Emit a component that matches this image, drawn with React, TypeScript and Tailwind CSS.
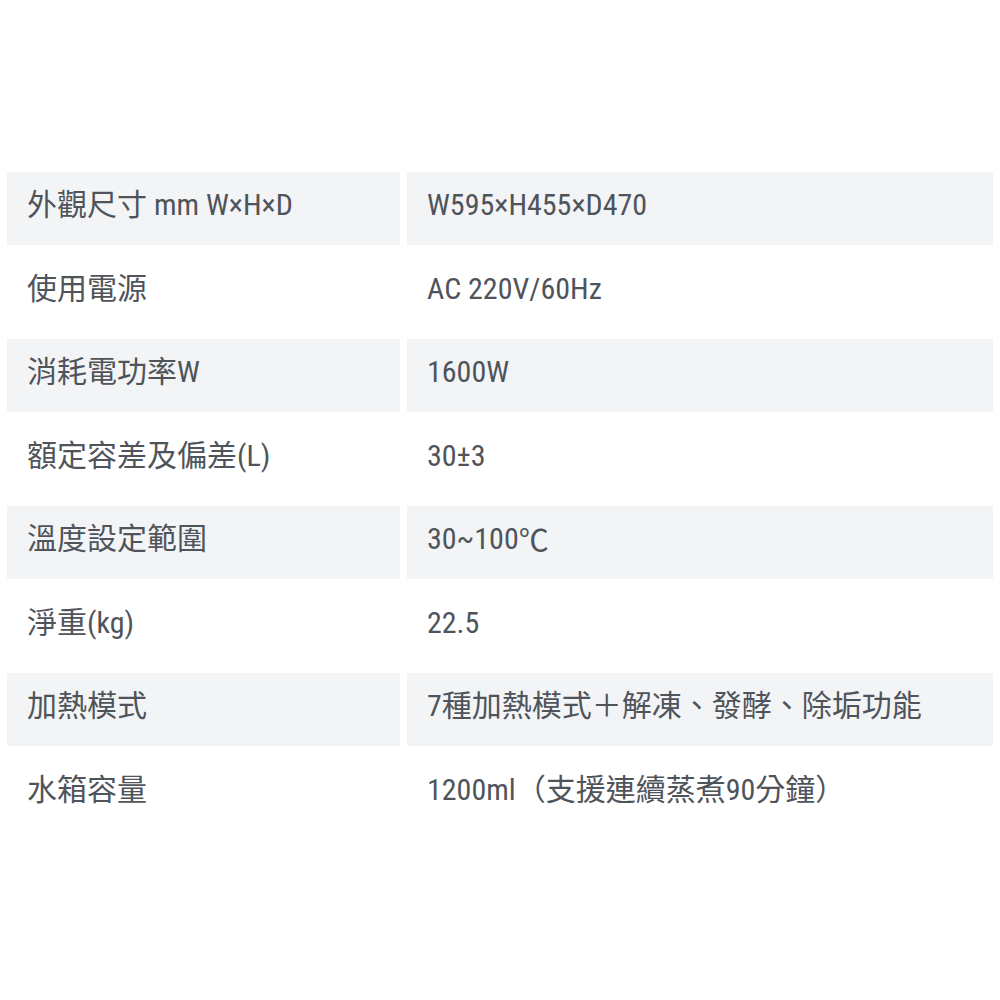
import React from "react";

// 規格表資料
const specs: { label: React.ReactNode; value: React.ReactNode }[] = [
  { label: "外觀尺寸 mm W×H×D", value: "W595×H455×D470" },
  { label: "使用電源", value: "AC 220V/60Hz" },
  { label: "消耗電功率W", value: "1600W" },
  { label: "額定容差及偏差(L)", value: "30±3" },
  {
    label: "溫度設定範圍",
    value: (
      <>
        30~100<span className="font-['Noto_Sans_CJK_TC',sans-serif]">℃</span>
      </>
    ),
  },
  { label: "淨重(kg)", value: "22.5" },
  { label: "加熱模式", value: "7種加熱模式＋解凍、發酵、除垢功能" },
  { label: "水箱容量", value: "1200ml（支援連續蒸煮90分鐘）" },
];

export default function App() {
  return (
    <div className="w-[1000px] h-[1000px] bg-white pt-[172px] px-[7px] font-['Roboto_Condensed','Noto_Sans_CJK_TC',sans-serif]">
      <div className="grid grid-cols-[393px_1fr] gap-x-[7px] gap-y-[10.5px] text-[30px] text-[#4f545b]">
        {specs.map((row, i) => {
          const bg = i % 2 === 0 ? "bg-[#f3f4f6]" : "bg-white";
          return (
            <React.Fragment key={i}>
              <div className={`${bg} h-[73px] flex items-center pl-[20px] pb-[8px]`}>{row.label}</div>
              <div className={`${bg} h-[73px] flex items-center pl-[20px] pb-[8px]`}>{row.value}</div>
            </React.Fragment>
          );
        })}
      </div>
    </div>
  );
}
